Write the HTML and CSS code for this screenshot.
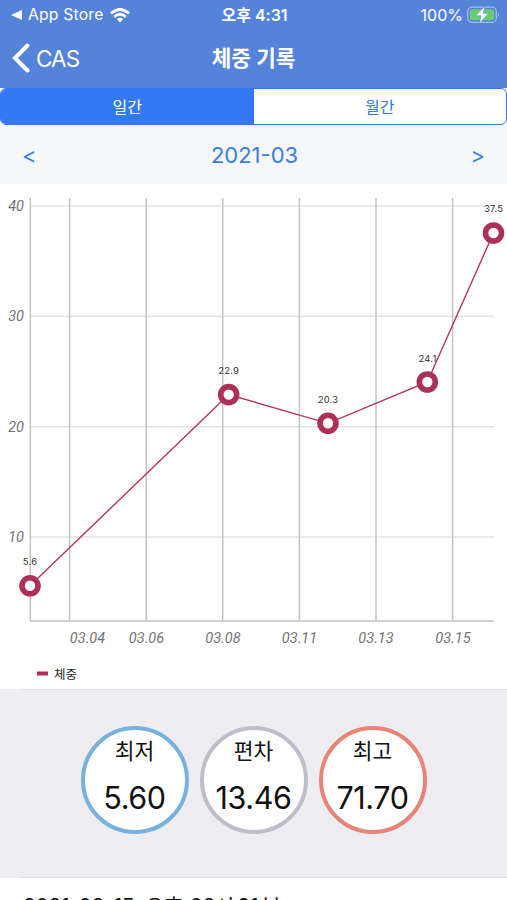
FILE: index.html
```html
<!DOCTYPE html>
<html lang="ko">
<head>
    <meta charset="UTF-8">
    <meta name="viewport" content="width=device-width, initial-scale=1.0">
    <title>체중 기록</title>
    <link rel="stylesheet" href="styles.css">
</head>

<body>
<div class="wrap">
    <header>
        <div class="status">
            <div class="left">
                <svg class="tri" width="11" height="10" viewBox="0 0 11 10"><path d="M0 5L11 0V10Z" fill="#fff"/></svg>
                <span class="store">App Store</span>
                <svg class="wifi" width="20" height="15" viewBox="0 0 20 15" fill="none" stroke="#fff" stroke-width="2.9">
                    <path d="M.9 5.5Q10-2.7 19.1 5.5"/>
                    <path d="M4.2 9Q10 3.7 15.8 9"/>
                    <path d="M6.9 11.2Q10 8.4 13.1 11.2L10 14.5Z" fill="#fff" stroke="none"/>
                </svg>
            </div>
            <span class="time">오후 4:31</span>
            <div class="right">
                <span class="percent">100%</span>
                <svg class="battery" width="33" height="18" viewBox="0 0 33 18">
                    <rect x=".7" y="1.2" width="28.6" height="15.2" rx="4.5" fill="none" stroke="#a5bfed" stroke-width="1.2"/>
                    <rect x="2.8" y="3.3" width="24.4" height="11" rx="2.5" fill="#69cd70"/>
                    <path d="M31 6.3Q33 8.8 31 11.3Z" fill="#a5bfed"/>
                    <path d="M18 0L8.6 9.8H14L12.3 17.4L21.8 7.2H16.2Z" fill="#fff" stroke="#5583da" stroke-width=".6"/>
                </svg>
            </div>
        </div>
        <div class="nav">
            <div class="back">
                <svg width="18" height="30" viewBox="0 0 18 30"><path d="M15.5 2.5L3 15L15.5 27.5" fill="none" stroke="#fff" stroke-width="4" stroke-linecap="round"/></svg>
                <span>CAS</span>
            </div>
            <h1>체중 기록</h1>
            <div></div>
        </div>
    </header>
    <div class="tabs">
        <span class="tab active">일간</span>
        <span class="tab">월간</span>
    </div>
    <div class="month">
        <span class="prev">&lt;</span>
        <span class="name">2021-03</span>
        <span class="next">&gt;</span>
    </div>
    <div class="chart">
        <svg width="507" height="505" viewBox="0 184 507 505">
            <g class="grid">
                <path d="M30 206H494M30 316.3H494M30 426.7H494M30 537H494"/>
            </g>
            <g class="axis">
                <path d="M30.3 198V621M69.6 198V621M146.2 198V621M222.7 198V621M299.4 198V621M376 198V621M452.6 198V621M30 621H494"/>
            </g>
            <g class="ylabel">
                <text x="24" y="210.5">40</text>
                <text x="24" y="321">30</text>
                <text x="24" y="431.5">20</text>
                <text x="24" y="542">10</text>
            </g>
            <g class="xlabel">
                <text x="87.5" y="643">03.04</text>
                <text x="146.5" y="643">03.06</text>
                <text x="223" y="643">03.08</text>
                <text x="299.5" y="643">03.11</text>
                <text x="376" y="643">03.13</text>
                <text x="453" y="643">03.15</text>
            </g>
            <g class="value">
                <text x="30" y="565">5.6</text>
                <text x="228.7" y="374">22.9</text>
                <text x="328" y="402.5">20.3</text>
                <text x="427.5" y="361.5">24.1</text>
                <text x="493.5" y="212">37.5</text>
            </g>
            <polyline class="line" points="30,585.8 228.7,394.6 328,423.3 427.3,382 493.5,233"/>
            <g class="dot">
                <circle cx="30" cy="585.8" r="8"/>
                <circle cx="228.7" cy="394.6" r="8"/>
                <circle cx="328" cy="423.3" r="8"/>
                <circle cx="427.3" cy="382" r="8"/>
                <circle cx="493.5" cy="233" r="8"/>
            </g>
            <rect x="37" y="671.5" width="11" height="4" fill="#ad3056"/>
            <text class="legend" x="54" y="678.5">체중</text>
        </svg>
    </div>
    <div class="summary">
        <div class="circle low"><span class="label">최저</span><span class="num">5.60</span></div>
        <div class="circle dev"><span class="label">편차</span><span class="num">13.46</span></div>
        <div class="circle high"><span class="label">최고</span><span class="num">71.70</span></div>
    </div>
    <div class="record">
        <span class="date">2021-03-15</span>
        <span class="ko">오후</span>
        <span class="hour">03</span>
        <span class="ko">시</span>
        <span class="minute">21</span>
        <span class="ko">분</span>
    </div>
</div>
</body>
</html>
```
FILE: styles.css
```css
body {
    margin: 0;
    font-family: Inter, "Noto Sans CJK KR", sans-serif;
    background-color: #fff;
}

.wrap {
    width: 507px;
    height: 900px;
    overflow: hidden;
}

header {
    height: 88px;
    color: #fff;
    background-color: #5583da;
}

.status,
.nav {
    display: grid;
    grid-template-columns: 1fr auto 1fr;
    align-items: center;
}

.status {
    height: 30px;
    padding: 0 7px 0 11px;
    font-size: 16px;
    line-height: 30px;
}

.status .left,
.status .right,
.back {
    display: flex;
    align-items: center;
}

.store {
    margin: 0 6px 0 6px;
    font-size: 15.7px;
    letter-spacing: 0.2px;
}

.time {
    padding-right: 2px;
    font-size: 16px;
    font-weight: 600;
}

.status .right {
    justify-content: flex-end;
    gap: 4px;
}

.nav {
    height: 56px;
    padding: 0 12px;
}

.back {
    gap: 6px;
    font-size: 22.5px;
    letter-spacing: -0.9px;
}

h1 {
    margin: 0;
    font-size: 21.3px;
    font-weight: 600;
    line-height: 30px;
}

.tabs {
    display: flex;
    box-sizing: border-box;
    height: 37px;
    border: 1px solid #3478f6;
    border-radius: 6px;
    background-color: #fff;
    overflow: hidden;
}

.tab {
    flex: 1;
    color: #3478f6;
    font-size: 16px;
    line-height: 37px;
    text-align: center;
}

.tab.active {
    color: #fff;
    background-color: #3478f6;
}

.month {
    display: flex;
    justify-content: space-between;
    height: 59px;
    padding: 0 22px;
    color: #397ee6;
    font-size: 22px;
    line-height: 60px;
    background-color: #f6f7f8;
}

.month .name {
    padding-left: 2px;
}

.chart {
    height: 505px;
}

.chart svg {
    display: block;
}

.grid path {
    stroke: #e4e4e4;
    stroke-width: 1.4;
}

.axis path {
    fill: none;
    stroke: #c3c3c3;
    stroke-width: 1.5;
}

.ylabel,
.xlabel {
    fill: #737373;
    font-family: Roboto, sans-serif;
    font-size: 14.5px;
    font-style: italic;
}

.ylabel {
    text-anchor: end;
}

.xlabel,
.value {
    text-anchor: middle;
}

.value {
    fill: #333;
    font-size: 9.5px;
    letter-spacing: 0.2px;
}

.line {
    fill: none;
    stroke: #b5355e;
    stroke-width: 1.4;
}

.dot circle {
    fill: #fff;
    stroke: #ad3056;
    stroke-width: 5.6;
}

.legend {
    fill: #222;
    font-size: 12.5px;
}

.summary {
    display: flex;
    justify-content: center;
    gap: 11px;
    box-sizing: border-box;
    height: 189px;
    padding-top: 37px;
    background: linear-gradient(#dedee1, #dedee1) 21px 0 / 100% 1px no-repeat, linear-gradient(#dedee1, #dedee1) 21px 100% / 100% 1px no-repeat, #eeedf2;
}

.circle {
    display: flex;
    flex-direction: column;
    align-items: center;
    box-sizing: border-box;
    width: 108px;
    height: 108px;
    border: 4px solid #77b1de;
    border-radius: 50%;
    color: #111;
    background-color: #fff;
}

.dev {
    border-color: #bebdca;
}

.high {
    border-color: #e98378;
}

.label {
    margin-top: 6px;
    font-size: 21.5px;
    line-height: 30px;
}

.num {
    margin-top: 12px;
    font-size: 30.5px;
    line-height: 40px;
    letter-spacing: -0.4px;
}

.record {
    display: flex;
    align-items: flex-start;
    padding: 14px 23px 0;
    color: #111;
    font-size: 21px;
    line-height: 30px;
    white-space: nowrap;
}

.date {
    width: 122px;
    letter-spacing: -0.3px;
}

.hour {
    margin-left: 6px;
    letter-spacing: -0.5px;
}

.minute {
    margin: 0 3px;
}
```
